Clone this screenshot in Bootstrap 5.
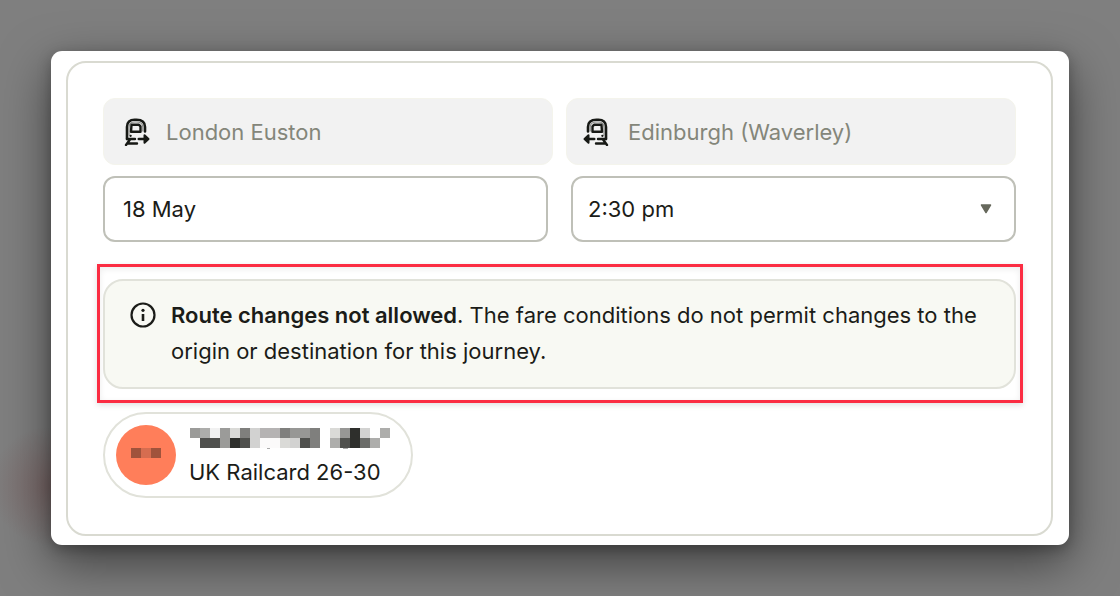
<!DOCTYPE html>
<html lang="en">
<head>
<meta charset="utf-8">
<meta name="viewport" content="width=device-width, initial-scale=1">
<title>Change journey</title>
<link href="https://cdn.jsdelivr.net/npm/bootstrap@5.3.0/dist/css/bootstrap.min.css" rel="stylesheet">
<style>
  body {
    font-family: Inter, "Liberation Sans", sans-serif;
    font-size: 22px;
    line-height: 36px;
    color: #1b1c18;
    background:
      radial-gradient(circle at 50px 486px, rgba(110, 40, 40, .25), transparent 60px),
      #7f7f7f;
  }
  .stage { padding: 51px; }
  .sheet {
    background: #fff;
    border-radius: 11px;
    padding: 10px 16px 9px 15px;
    box-shadow: 0 18px 50px rgba(0, 0, 0, .5), 0 4px 14px rgba(0, 0, 0, .25);
  }
  .panel { border: 2px solid #d9dad1; border-radius: 20px; padding: 35px 35px 36px; }
  .station { background: #f2f2f2; border: 1px solid #f4f4ec; border-radius: 12px; height: 67px; padding: 0 20px; gap: 16px; }
  .station-to { padding-left: 16px; gap: 19px; }
  .station svg { width: 26px; height: 28px; }
  .station input { color: #84867a; font: inherit; min-width: 0; }
  .pair-stations { gap: 13px; }
  .pair-when { grid-template-columns: 1fr 1fr; gap: 23px; margin: 11px 0 22px; }
  .when.form-control, .when.form-select {
    height: 66px; padding: 0 18px; font: inherit; color: #1b1c18;
    background-color: #fff; border: 2px solid #bfc0b8; border-radius: 12px;
  }
  .when.form-select {
    padding-left: 15px;
    background-image: url("data:image/svg+xml,%3Csvg xmlns='http://www.w3.org/2000/svg' viewBox='0 0 12 10'%3E%3Cpath d='M1.5 1h9L6 8.5z' fill='%2366685c' stroke='%2366685c' stroke-width='1.5' stroke-linejoin='round'/%3E%3C/svg%3E");
    background-size: 12px 10px;
    background-position: right 22px center;
  }
  .highlight { margin: 0 -7px 9px -6px; border: 3px solid #fb2c42; padding: 12px 4px 11px 3px; box-shadow: 0 2px 6px rgba(0, 0, 0, .13), inset 0 2px 6px rgba(0, 0, 0, .08); }
  .notice { background: #f8f9f3; border: 2px solid #e1e2da; border-radius: 20px; padding: 16px 20px 18px 25px; gap: 15px; }
  .notice svg { width: 26px; height: 26px; margin-top: 5px; }
  .notice strong { font-weight: 600; }
  .passenger { border: 2px solid #e1e2da; border-radius: 43px; padding: 11px 20px 11px 11px; gap: 13px; height: 86px; }
  .avatar { width: 60px; height: 60px; background: #ff7e5a; }
  .avatar svg { width: 30px; height: 10px; margin-bottom: 4px; }
  .redacted { width: 202px; height: 22px; margin: 6px 0; }
  .railcard { line-height: 32px; }
</style>
</head>
<body>
<svg class="d-none" aria-hidden="true">
  <symbol id="train" viewBox="0 0 26 28">
    <g fill="none" stroke="#171915" stroke-linecap="round" stroke-linejoin="round">
      <path stroke-width="2.6" d="M3 21V9C3 4 6 1.800 10.500 1.800h2C17.800 1.800 21 4 21 9v4.500"/>
      <path stroke="#8b8c89" stroke-width="1.200" d="M5 17V9.500C5 5.500 7 4 10.500 4h2c4 0 6.300 1.500 6.300 5v4"/>
      <path stroke-width="2.400" d="M7.500 6.800h7.500l1.500 1.500v5.500H7z"/>
      <path stroke-width="2.200" d="M6.500 17.800h.2"/>
      <path stroke-width="2.400" d="M3 21h8M2 27l4-5.500M4.500 25.500h8.500"/>
      <path stroke-width="2.600" d="M14.800 21h8"/>
      <path fill="#171915" stroke-width="2" d="M20.500 17.200 24.500 21l-4 3.800z"/>
    </g>
  </symbol>
</svg>
<main class="stage">
  <div class="sheet">
    <form class="panel">
      <div class="d-flex pair-stations">
        <div class="station d-flex align-items-center flex-fill w-50">
          <svg class="flex-shrink-0" viewBox="0 0 26 28" aria-hidden="true"><use href="#train"/></svg>
          <input class="border-0 bg-transparent p-0 w-100" type="text" value="London Euston" aria-label="Origin" readonly>
        </div>
        <div class="station station-to d-flex align-items-center flex-fill w-50">
          <svg class="flex-shrink-0" viewBox="0 0 26 28" aria-hidden="true"><g transform="matrix(-1 0 0 1 26 0)"><use href="#train" width="26" height="28"/></g></svg>
          <input class="border-0 bg-transparent p-0 w-100" type="text" value="Edinburgh (Waverley)" aria-label="Destination" readonly>
        </div>
      </div>

      <div class="d-grid pair-when">
        <input class="when form-control" type="text" value="18 May" aria-label="Date">
        <select class="when form-select" aria-label="Time"><option>2:30 pm</option></select>
      </div>

      <div class="highlight">
        <div class="notice d-flex align-items-start" role="note">
          <svg class="flex-shrink-0" viewBox="0 0 26 26" fill="none" stroke="#1b1c18" aria-hidden="true">
            <circle cx="13" cy="13" r="11.5" stroke-width="2.2"/>
            <path d="M13 12v7" stroke-width="2.6"/><circle cx="13" cy="8.3" r="1.6" fill="#1b1c18" stroke="none"/>
          </svg>
          <p class="mb-0"><strong>Route changes not allowed</strong>. The fare conditions do not permit changes to the origin or destination for this journey.</p>
        </div>
      </div>

      <div class="passenger d-inline-flex align-items-center align-top">
        <div class="avatar rounded-circle d-flex align-items-center justify-content-center flex-shrink-0">
          <svg viewBox="0 0 30 10" aria-hidden="true"><path fill="#a0533c" d="M0 0h10v10H0zM20 0h10v10H20z"/><path fill="#d66d50" d="M10 0h10v10H10z"/></svg>
        </div>
        <div>
          <svg class="redacted d-block" viewBox="0 0 202 22" shape-rendering="crispEdges" aria-hidden="true">
            <path fill="#9b9b99" d="M1 0h10v10H1zM31 0h10v20H31z"/><path fill="#adadab" d="M11 0h10v10H11zM191 0h10v10h-10zM141 10h10v10h-10zM181 10h10v10h-10z"/>
            <path fill="#f1f1f1" d="M21 0h10v10H21z"/><path fill="#dadad7" d="M41 0h10v10H41zM141 0h10v10h-10zM91 10h10v10H91z"/>
            <path fill="#7f7f7d" d="M51 0h10v10H51zM91 0h10v10H91zM121 0h10v20h-10z"/><path fill="#d2d2d1" d="M61 0h10v20H61zM101 10h10v10h-10zM171 0h10v10h-10z"/>
            <path fill="#b5b3b3" d="M71 0h20v10H71z"/><path fill="#979795" d="M101 0h20v10h-20zM151 0h10v10h-10z"/>
            <path fill="#2e2f2c" d="M161 0h10v20h-10zM41 10h10v10H41z"/><path fill="#4f504d" d="M11 10h20v10H11zM51 10h10v10H51zM111 10h10v10h-10zM151 10h10v10h-10z"/>
            <path fill="#6b6c69" d="M171 10h10v10h-10z"/><path fill="#fbfafa" d="M71 10h20v10H71z"/>
            <path fill="#aaa" d="M78 20h3v1h-3zM154 20h5v1h-5z"/>
          </svg>
          <div class="railcard">UK Railcard 26-30</div>
        </div>
      </div>
    </form>
  </div>
</main>
<script src="https://cdn.jsdelivr.net/npm/bootstrap@5.3.0/dist/js/bootstrap.bundle.min.js"></script>
</body>
</html>
